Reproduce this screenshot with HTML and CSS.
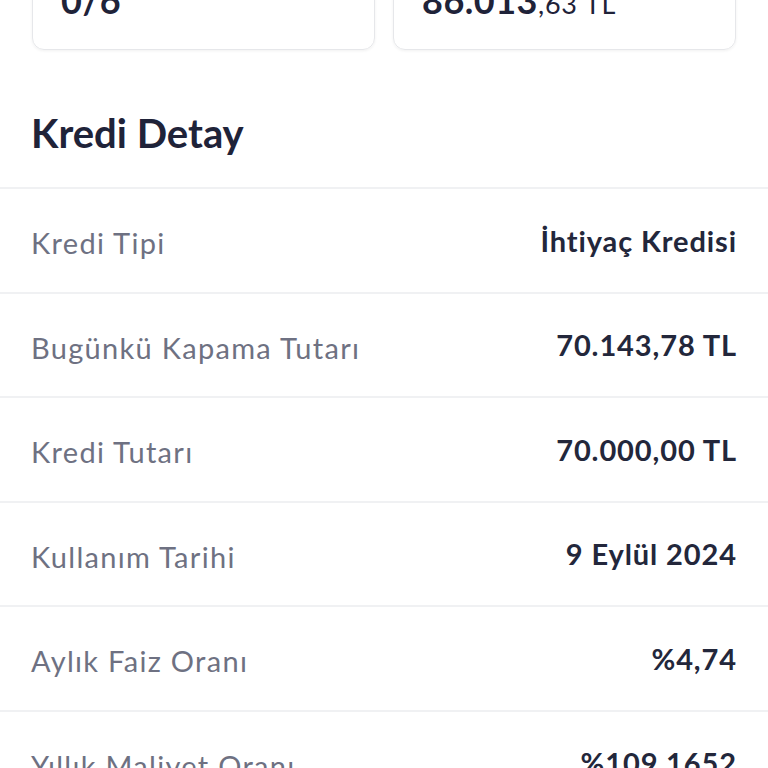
FILE: index.html
```html
<!DOCTYPE html>
<html lang="tr">
<head>
  <meta charset="utf-8">
  <title>Kredi Detay</title>
  <link rel="stylesheet" href="styles.css">
</head>
<body>

  <div class="summary">
    <div class="card">
      <div class="card-value">0/6</div>
    </div>
    <div class="card">
      <div class="card-value">86.013<small>,63 TL</small></div>
    </div>
  </div>

  <h2 class="title">Kredi Detay</h2>

  <div class="details">
    <div class="row">
      <span class="label">Kredi Tipi</span>
      <span class="value">İhtiyaç Kredisi</span>
    </div>
    <div class="row">
      <span class="label">Bugünkü Kapama Tutarı</span>
      <span class="value">70.143,78 TL</span>
    </div>
    <div class="row">
      <span class="label">Kredi Tutarı</span>
      <span class="value">70.000,00 TL</span>
    </div>
    <div class="row">
      <span class="label">Kullanım Tarihi</span>
      <span class="value">9 Eylül 2024</span>
    </div>
    <div class="row">
      <span class="label">Aylık Faiz Oranı</span>
      <span class="value">%4,74</span>
    </div>
    <div class="row">
      <span class="label">Yıllık Maliyet Oranı</span>
      <span class="value">%109,1652</span>
    </div>
  </div>

</body>
</html>
```

FILE: styles.css
```css
body {
  margin: 0;
  font-family: Lato, "Open Sans", sans-serif;
  background-color: #fff;
  color: #1f2339;
}

.summary {
  display: grid;
  grid-template-columns: 1fr 1fr;
  gap: 18px;
  padding: 0 32px;
  margin-top: -60px;
}

.card {
  height: 108px;
  border: 1.5px solid #e6e7ea;
  border-radius: 12px;
  box-shadow: 0 1px 3px rgba(0, 0, 0, 0.06);
  padding: 0 28px;
  display: flex;
  align-items: flex-start;
}

.card-value {
  margin-top: 41px;
  font-size: 36px;
  font-weight: 700;
  line-height: 36px;
  letter-spacing: 0.5px;
}

.card-value small {
  font-size: 27px;
  font-weight: 400;
  letter-spacing: 0.8px;
}

.title {
  margin: 59px 0 0;
  padding: 0 31px 30px;
  font-size: 40px;
  font-weight: 700;
  line-height: 48px;
  border-bottom: 2px solid #f0f1f3;
}

.row {
  display: flex;
  justify-content: space-between;
  align-items: center;
  height: 102.5px;
  padding: 0 31px;
  border-bottom: 2px solid #f0f1f3;
}

.label {
  margin-top: 5px;
  font-size: 29px;
  letter-spacing: 1.3px;
  color: #6e7182;
}

.value {
  font-size: 29px;
  font-weight: 700;
  letter-spacing: 0.9px;
  color: #23273b;
}
```
